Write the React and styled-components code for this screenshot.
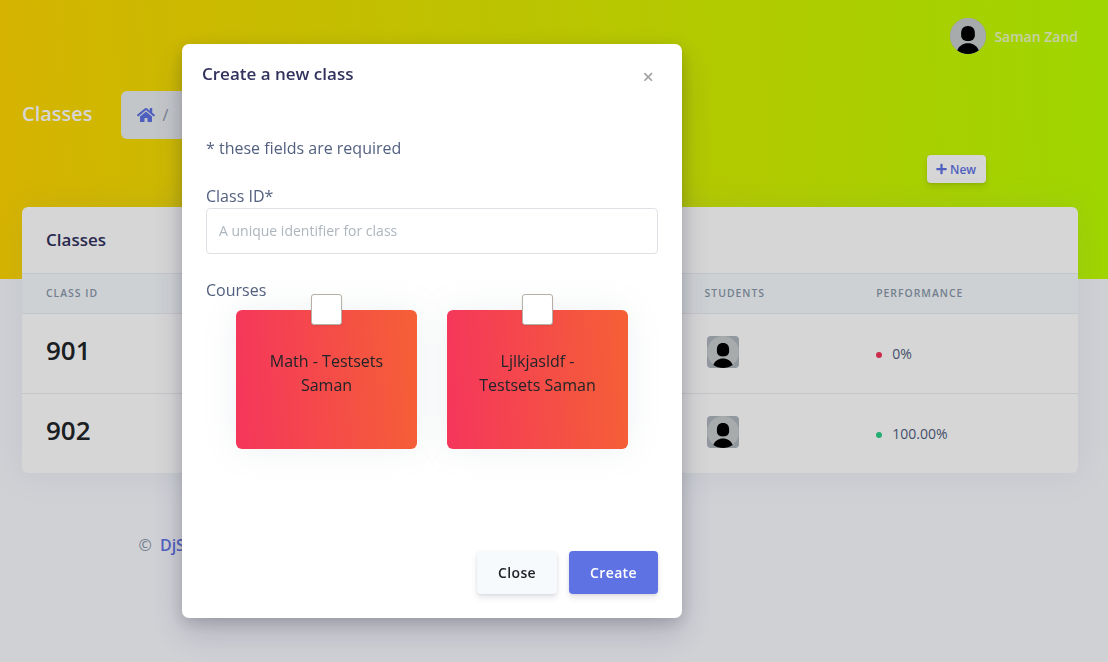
import React from "react";
import styled, { createGlobalStyle } from "styled-components";
import { FaHome, FaPlus } from "react-icons/fa";

const GlobalStyle = createGlobalStyle`
  *, *::before, *::after { box-sizing: border-box; }
  body {
    margin: 0;
    overflow: hidden;
    background: #f8f9fe;
    color: #525f7f;
    font: 400 16px/1.5 "Open Sans", sans-serif;
  }
  h1, h2, h3, p { margin: 0; }
  button, input { font-family: inherit; }
`;

const Page = styled.div`
  height: 662px;
  overflow: hidden;
`;

const Header = styled.header`
  height: 279px;
  padding: 0 30px 0 22px;
  background: linear-gradient(87deg, #ffd600 0, #beff00 100%);
`;

const UserBar = styled.div`
  display: flex;
  align-items: center;
  justify-content: flex-end;
  gap: 8px;
  height: 72px;
  color: rgba(248, 249, 254, 0.8);
  font-size: 14px;
  font-weight: 600;
`;

const AvatarFrame = styled.span`
  display: block;
  flex: none;
  width: ${(p) => p.$size}px;
  height: ${(p) => p.$size}px;
  border-radius: ${(p) => (p.$round ? "50%" : "4px")};
  background: #adb5bd;
  overflow: hidden;

  svg { display: block; }
`;

const TitleRow = styled.div`
  display: flex;
  align-items: center;
  gap: 28px;
  height: 48px;
  margin-top: 19px;
`;

const PageTitle = styled.h2`
  padding-bottom: 2px;
  color: #fff;
  font-size: 20px;
  font-weight: 600;
  line-height: 30px;
`;

const Breadcrumb = styled.nav`
  display: flex;
  align-items: center;
  gap: 8px;
  width: 170px;
  height: 48px;
  padding: 0 16px;
  border-radius: 6px;
  background: #e9ecef;
  color: #8898aa;

  svg { color: #5e72e4; font-size: 18px; }
`;

const Actions = styled.div`
  display: flex;
  justify-content: flex-end;
  padding: 16px 92px 0 0;
`;

const buttonShadow = "0 4px 6px rgba(50, 50, 93, 0.11), 0 1px 3px rgba(0, 0, 0, 0.08)";

const NewButton = styled.button`
  display: flex;
  align-items: center;
  justify-content: flex-start;
  gap: 3px;
  width: 59px;
  height: 28px;
  padding: 0 0 0 9px;
  border: 0;
  border-radius: 4px;
  background: #fff;
  box-shadow: ${buttonShadow};
  color: #5e72e4;
  font-size: 12px;
  font-weight: 600;

  svg { flex: none; width: 11px; height: 12px; }
`;

const Card = styled.section`
  position: relative;
  margin: -72px 30px 0 22px;
  border-radius: 6px;
  background: #fff;
  box-shadow: 0 0 32px rgba(136, 152, 170, 0.15);
`;

const CardTitle = styled.h3`
  height: 66px;
  padding: 20px 24px;
  color: #32325d;
  font-size: 17px;
  font-weight: 600;
  line-height: 26px;
`;

const Row = styled.div`
  display: grid;
  grid-template-columns: 658.6px 171.600px 1fr;
  height: 80px;
  padding: 0 24px;
  border-top: 1px solid #e9ecef;
`;

const HeadRow = styled(Row)`
  align-items: center;
  height: 40px;
  background: #f6f9fc;
  color: #8898aa;
  font-size: 10.4px;
  font-weight: 600;
  letter-spacing: 1px;
`;

const ClassName = styled.h1`
  padding-top: 17px;
  color: #212529;
  font-size: 26px;
  font-weight: 600;
  line-height: 39px;
`;

const Students = styled.div`
  padding: 22px 0 0 2.400px;
`;

const Performance = styled.div`
  display: flex;
  align-items: center;
  gap: 10px;
  font-size: 14px;
`;

const Dot = styled.i`
  width: 6px;
  height: 6px;
  margin-top: 2px;
  border-radius: 50%;
  background: ${(p) => p.$color};
`;

const Footer = styled.footer`
  display: flex;
  gap: 8px;
  padding: 60px 0 0 138.600px;
  color: #8898aa;

  b { color: #5e72e4; font-weight: 600; }
`;

const Backdrop = styled.div`
  position: fixed;
  inset: 0;
  background: rgba(0, 0, 0, 0.16);
`;

const Dialog = styled.div`
  display: flex;
  flex-direction: column;
  width: 500px;
  height: 574px;
  margin: 44px 0 0 182px;
  border-radius: 7px;
  background: #fff;
  box-shadow: 0 15px 35px rgba(50, 50, 93, 0.2), 0 5px 15px rgba(0, 0, 0, 0.17);
`;

const DialogHeader = styled.div`
  display: flex;
  justify-content: space-between;
  align-items: flex-start;
  height: 68px;
  padding: 17px 28px 0 20px;
`;

const DialogTitle = styled.h3`
  color: #32325d;
  font-size: 17px;
  font-weight: 600;
  line-height: 26px;
`;

const CloseIcon = styled.button`
  padding: 6px 0 0;
  border: 0;
  background: none;
  color: rgba(0, 0, 0, 0.36);
  font-size: 20px;
  font-weight: 600;
  line-height: 20px;
`;

const DialogBody = styled.div`
  flex: 1;
  padding: 24px 24px 0;
`;

const Note = styled.p`
  margin-bottom: 24px;
`;

const Label = styled.label`
  display: block;
`;

const TextInput = styled.input`
  display: block;
  width: 100%;
  height: 46px;
  margin-bottom: 24px;
  padding: 9px 12px 11px;
  border: 1px solid #dee2e6;
  border-radius: 4px;
  font-size: 14px;
  line-height: 21px;

  &::placeholder { color: #adb5bd; opacity: 1; }
`;

const Courses = styled.div`
  display: grid;
  grid-template-columns: 1fr 1fr;
  gap: 30px;
  padding: 8px 30px 0;
`;

const CourseCard = styled.div`
  position: relative;
  height: 139px;
  padding: 39px 24px 0;
  border-radius: 6px;
  background: linear-gradient(87deg, #f5365c 0, #f56036 100%);
  box-shadow: 0 0 32px rgba(136, 152, 170, 0.15);
  color: #212529;
  text-align: center;
`;

const CourseCheck = styled.span`
  position: absolute;
  top: -16px;
  left: 75px;
  width: 31px;
  height: 31px;
  border: 1px solid #b7b0a8;
  border-radius: 3px;
  background: #fff;
  box-shadow: 0 1px 2px rgba(90, 60, 50, 0.12);
`;

const DialogFooter = styled.div`
  display: flex;
  justify-content: flex-end;
  gap: 12px;
  padding: 0 24px 24px;
`;

const Button = styled.button`
  width: ${(p) => p.$width}px;
  height: 43px;
  padding: 0;
  border: 0;
  border-radius: 4px;
  background: ${(p) => (p.$primary ? "#5e72e4" : "#f7fafc")};
  box-shadow: ${buttonShadow};
  color: ${(p) => (p.$primary ? "#fff" : "#212529")};
  font-size: 14px;
  font-weight: 600;
  letter-spacing: 0.35px;
`;

function Avatar({ size, round }) {
  return (
    <AvatarFrame $size={size} $round={round}>
      <svg width={size} height={size} viewBox="0 0 32 32">
        <circle cx="16" cy="16" r="16" fill="#c7cccd" />
        <path d="M16 7c4.1 0 6.1 2.5 6.1 6.5v1.8c0 3.5-2.6 5.2-6.1 5.2s-6.1-1.7-6.1-5.2v-1.8C9.9 9.500 11.900 7 16 7Z" />
        <path d="M6.300 29C8 24.800 11.500 22.500 16 22.500s8 2.300 9.700 6.500C23 31 19.500 32 16 32s-7-1-9.700-3Z" />
      </svg>
    </AvatarFrame>
  );
}

const classes = [
  { id: "901", performance: "0%", color: "#f5365c" },
  { id: "902", performance: "100.00%", color: "#2dce89" },
];

const courses = ["Math - Testsets Saman", "Ljlkjasldf - Testsets Saman"];

export default function App() {
  return (
    <>
      <GlobalStyle />
      <Page>
        <Header>
          <UserBar>
            <Avatar size={36} round />
            <span>Saman Zand</span>
          </UserBar>
          <TitleRow>
            <PageTitle>Classes</PageTitle>
            <Breadcrumb>
              <FaHome />
              <span>/</span>
            </Breadcrumb>
          </TitleRow>
          <Actions>
            <NewButton>
              <FaPlus />
              New
            </NewButton>
          </Actions>
        </Header>
        <Card>
          <CardTitle>Classes</CardTitle>
          <HeadRow>
            <span>CLASS ID</span>
            <span>STUDENTS</span>
            <span>PERFORMANCE</span>
          </HeadRow>
          {classes.map((c) => (
            <Row key={c.id}>
              <ClassName>{c.id}</ClassName>
              <Students>
                <Avatar size={32} />
              </Students>
              <Performance>
                <Dot $color={c.color} />
                {c.performance}
              </Performance>
            </Row>
          ))}
        </Card>
        <Footer>
          <span>©</span>
          <b>DjS</b>
        </Footer>
      </Page>
      <Backdrop>
        <Dialog role="dialog">
          <DialogHeader>
            <DialogTitle>Create a new class</DialogTitle>
            <CloseIcon aria-label="Close">×</CloseIcon>
          </DialogHeader>
          <DialogBody>
            <Note>* these fields are required</Note>
            <Label htmlFor="class-id">Class ID*</Label>
            <TextInput id="class-id" placeholder="A unique identifier for class" />
            <Label as="div">Courses</Label>
            <Courses>
              {courses.map((name) => (
                <CourseCard key={name}>
                  <CourseCheck />
                  {name}
                </CourseCard>
              ))}
            </Courses>
          </DialogBody>
          <DialogFooter>
            <Button $width={80}>Close</Button>
            <Button $width={89} $primary>
              Create
            </Button>
          </DialogFooter>
        </Dialog>
      </Backdrop>
    </>
  );
}
